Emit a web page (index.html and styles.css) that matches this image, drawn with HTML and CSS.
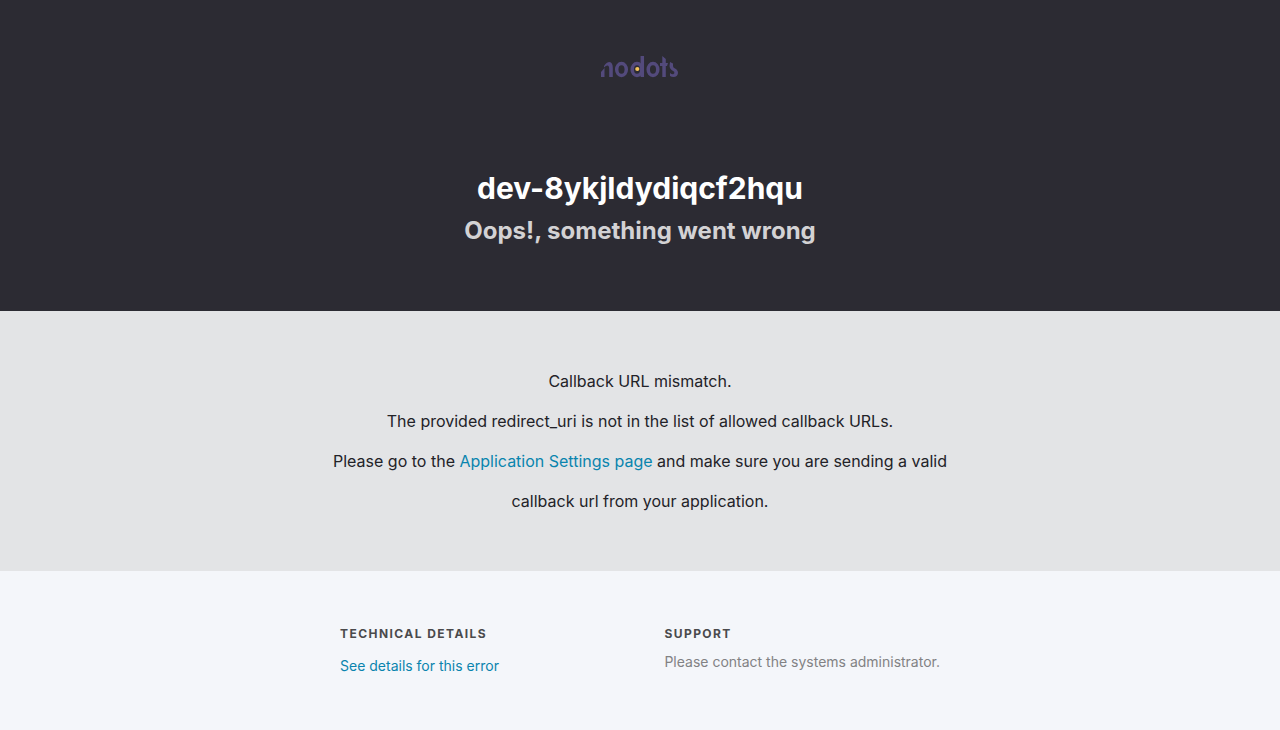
FILE: index.html
```html
<!DOCTYPE html>
<html lang="en">
<head>
<meta charset="utf-8">
<title>Oops!, something went wrong</title>
<link rel="stylesheet" href="styles.css">
</head>
<body>
<header class="hero">
  <svg class="logo" viewBox="0 0 80 24" role="img" aria-label="nodots">
    <g fill="#534a7c">
      <path d="M1 21V16L4.500 12V21Z"/>
      <path d="M4 10Q6.500 6 9.500 6Q12.800 6.500 12.800 12V21H9.200V13Q9.200 9.500 7.500 9.500Q6 9.500 4 11.500Z"/>
      <path d="M62.300 0L65.800 3V7H68L67 10H65.800V21H62.300V10H60V7H62.300Z"/>
      <path d="M70 6L73 7.500V10Q73 11.500 75 12.500Q78 14 78 17Q77.500 21 73.500 21Q71.500 21 70 20V17Q71.500 18.300 73.200 18.200Q75 17.500 74.200 15.800L71.500 14Q69.500 12.500 69.500 10Z"/>
    </g>
    <g fill="none" stroke="#534a7c" stroke-width="3.5">
      <ellipse cx="21.500" cy="13.500" rx="4.800" ry="6"/>
      <ellipse cx="37" cy="13.500" rx="4.800" ry="6"/>
      <path d="M42.300 0V21"/>
      <ellipse cx="53" cy="13.500" rx="4.800" ry="6"/>
    </g>
    <circle cx="37.300" cy="13" r="2.100" fill="#f5c45c"/>
  </svg>
  <h1 class="title">dev-8ykjldydiqcf2hqu</h1>
  <h2 class="subtitle">Oops!, something went wrong</h2>
</header>
<main class="message">
  <p class="message-text">Callback URL mismatch.<br>The provided redirect_uri is not in the list of allowed callback URLs.<br>Please go to the <a class="link" href="#settings">Application Settings page</a> and make sure you are sending a valid callback url from your application.</p>
</main>
<footer class="details">
  <div class="columns">
    <section class="column">
      <h3 class="heading">Technical Details</h3>
      <a class="link details-link" href="#details">See details for this error</a>
    </section>
    <section class="column">
      <h3 class="heading">Support</h3>
      <p class="support-text">Please contact the systems administrator.</p>
    </section>
  </div>
</footer>
</body>
</html>
```
FILE: styles.css
```css
* { box-sizing: border-box; }
body {
  margin: 0;
  min-height: 100vh;
  background: #f4f6fa;
  color: #222228;
  font-family: Inter, "Liberation Sans", sans-serif;
}
.hero {
  display: flex;
  flex-direction: column;
  align-items: center;
  padding: 56px 20px 60px;
  background: #2c2b33;
  text-align: center;
}
.logo { display: block; width: 80px; height: 24px; }
.title {
  margin: 86px 0 0;
  color: #fff;
  font-size: 30px;
  line-height: 45px;
  font-weight: 700;
}
.subtitle {
  margin: 0;
  color: #d3d2d4;
  font-size: 24px;
  line-height: 40px;
  font-weight: 700;
}
.message { padding: 50px 20px; background: #e3e4e6; }
.message-text {
  max-width: 620px;
  margin: 0 auto;
  font-size: 16px;
  line-height: 40px;
  text-align: center;
}
.link { color: #0a84ae; text-decoration: none; }
.details { padding: 50px 20px; }
.columns {
  display: flex;
  justify-content: space-between;
  max-width: 600px;
  margin: 0 auto;
}
.heading {
  margin: 0;
  color: #4a4a4c;
  font-size: 12px;
  line-height: 26px;
  font-weight: 700;
  letter-spacing: 0.12em;
  text-transform: uppercase;
}
.details-link { display: block; margin-top: 8px; font-size: 14px; line-height: 22px; }
.support-text { margin: 4px 0 0; color: #828284; font-size: 14px; line-height: 22px; }
```
